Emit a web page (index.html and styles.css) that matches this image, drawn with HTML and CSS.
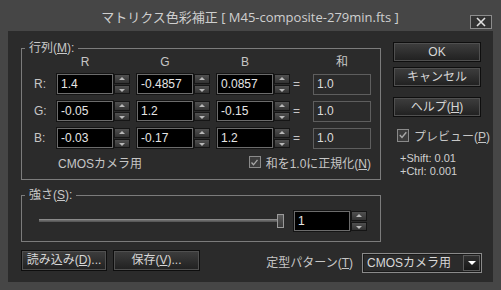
FILE: index.html
```html
<!DOCTYPE html>
<html lang="ja">
<head>
<meta charset="utf-8">
<link rel="stylesheet" href="styles.css">
</head>
<body>
<div class="window">
  <div class="titlebar">
    <div class="title">マトリクス色彩補正 [ M45-composite-279min.fts ]</div>
    <div class="close"><svg width="12" height="10" viewBox="0 0 12 10"><path d="M2 1 L10 9 M10 1 L2 9" stroke="#e0e0e0" stroke-width="1.6" fill="none"/></svg></div>
  </div>
  <div class="client">
    <div class="top">
      <div class="leftcol">
        <fieldset class="group matrix">
          <legend>行列(<u>M</u>):</legend>
          <div class="mhead">
            <span class="hlabel"></span>
            <span class="hcell">R</span>
            <span class="hcell">G</span>
            <span class="hcell last">B</span>
            <span class="heq"></span>
            <span class="hsum">和</span>
          </div>
          <div class="mrow">
            <span class="rlabel">R:</span>
            <span class="cell"><span class="field">1.4</span><span class="spin"><span class="sbtn up"></span><span class="sbtn down"></span></span></span>
            <span class="cell"><span class="field">-0.4857</span><span class="spin"><span class="sbtn up"></span><span class="sbtn down"></span></span></span>
            <span class="cell last"><span class="field">0.0857</span><span class="spin"><span class="sbtn up"></span><span class="sbtn down"></span></span></span>
            <span class="eq">=</span>
            <span class="sum">1.0</span>
          </div>
          <div class="mrow">
            <span class="rlabel">G:</span>
            <span class="cell"><span class="field">-0.05</span><span class="spin"><span class="sbtn up"></span><span class="sbtn down"></span></span></span>
            <span class="cell"><span class="field">1.2</span><span class="spin"><span class="sbtn up"></span><span class="sbtn down"></span></span></span>
            <span class="cell last"><span class="field">-0.15</span><span class="spin"><span class="sbtn up"></span><span class="sbtn down"></span></span></span>
            <span class="eq">=</span>
            <span class="sum">1.0</span>
          </div>
          <div class="mrow">
            <span class="rlabel">B:</span>
            <span class="cell"><span class="field">-0.03</span><span class="spin"><span class="sbtn up"></span><span class="sbtn down"></span></span></span>
            <span class="cell"><span class="field">-0.17</span><span class="spin"><span class="sbtn up"></span><span class="sbtn down"></span></span></span>
            <span class="cell last"><span class="field">1.2</span><span class="spin"><span class="sbtn up"></span><span class="sbtn down"></span></span></span>
            <span class="eq">=</span>
            <span class="sum">1.0</span>
          </div>
          <div class="noterow">
            <span class="note">CMOSカメラ用</span>
            <span class="check small"><svg width="9" height="9" viewBox="0 0 9 9"><path d="M1.5 4.5 L3.5 6.8 L7.5 1.8" stroke="#a8a8a8" stroke-width="1.3" fill="none"/></svg></span>
            <span class="checklabel">和を1.0に正規化(<u>N</u>)</span>
          </div>
        </fieldset>
        <fieldset class="group strength">
          <legend>強さ(<u>S</u>):</legend>
          <div class="srow">
            <div class="slider"><div class="track"></div><div class="thumb"></div></div>
            <span class="cell"><span class="field">1</span><span class="spin"><span class="sbtn up"></span><span class="sbtn down"></span></span></span>
          </div>
        </fieldset>
      </div>
      <div class="rightcol">
        <div class="btn">OK</div>
        <div class="btn">キャンセル</div>
        <div class="btn help">ヘルプ(<u>H</u>)</div>
        <div class="previewrow">
          <span class="check"><svg width="10" height="10" viewBox="0 0 10 10"><path d="M1.8 5 L4 7.5 L8.3 2.2" stroke="#a8a8a8" stroke-width="1.4" fill="none"/></svg></span>
          <span class="checklabel">プレビュー(<u>P</u>)</span>
        </div>
        <div class="hint"><div>+Shift: 0.01</div><div>+Ctrl: 0.001</div></div>
      </div>
    </div>
    <div class="bottom">
      <div class="btn wide">読み込み(<u>D</u>)...</div>
      <div class="btn wide">保存(<u>V</u>)...</div>
      <span class="patlabel">定型パターン(<u>T</u>)</span>
      <div class="combo"><span class="combotext">CMOSカメラ用</span><span class="dropbtn"></span></div>
    </div>
  </div>
</div>
</body>
</html>
```

FILE: styles.css
```css
* { box-sizing: border-box; }
html, body { margin: 0; padding: 0; }
body {
  width: 501px;
  height: 290px;
  overflow: hidden;
  background: #464646;
  font-family: "Liberation Sans", "Noto Sans CJK JP", sans-serif;
  font-size: 12px;
  color: #c6c6c6;
}
u { text-decoration: underline; text-underline-offset: 1px; }

.window { width: 501px; height: 290px; background: #464646; }

.titlebar {
  height: 31px;
  display: grid;
  grid-template-columns: 1fr auto 1fr;
  padding: 0 9px 0 8px;
}
.title {
  grid-column: 2;
  align-self: start;
  margin-top: 9px;
  font-family: "Open Sans", "Noto Sans CJK JP", sans-serif;
  font-size: 13px;
  line-height: 16px;
  color: #cfcfcf;
  white-space: nowrap;
}
.close {
  grid-column: 3;
  justify-self: end;
  align-self: start;
  margin-top: 15px;
  width: 22px;
  height: 14px;
  border: 1px solid #8c8c8c;
  background: #333;
  display: flex;
  align-items: center;
  justify-content: center;
}

.client {
  margin: 0 8px;
  height: 251px;
  background: #2b2b2b;
  padding: 10px 11px 0 13px;
}
.top { display: flex; gap: 12px; }
.leftcol { width: 360px; display: flex; flex-direction: column; }

.group {
  margin: 0;
  padding: 0 9px 10px 0;
  border: 1px solid #7c7c7c;
  width: 360px;
  min-width: 0;
}
.group legend {
  margin-left: 3px;
  padding: 0 4px;
  height: 14px;
  line-height: 14px;
  font-size: 12px;
  color: #c8c8c8;
}
.strength { margin-top: 8px; }

.mhead {
  display: flex;
  height: 14px;
  line-height: 14px;
  margin-bottom: 5px;
}
.hlabel { width: 35px; }
.hcell { width: 80px; padding-right: 24px; text-align: center; }
.hcell.last { width: 73px; padding-right: 17px; }
.heq { width: 23px; }
.hsum { width: 58px; text-align: center; }

.mrow {
  display: flex;
  height: 20px;
  align-items: center;
  margin-bottom: 7px;
}
.rlabel { width: 35px; padding-left: 12px; line-height: 20px; }
.cell { width: 80px; display: flex; height: 20px; }
.cell.last { width: 73px; }
.field {
  width: 56px;
  height: 20px;
  background: #000;
  border: 1px solid #6c6c6c;
  box-shadow: 0 0 0 1px #141414;
  color: #e6e6e6;
  padding-left: 3px;
  line-height: 18px;
  font-size: 12px;
}
.spin {
  width: 16px;
  height: 20px;
  margin-left: 1px;
  display: flex;
  flex-direction: column;
  gap: 1px;
}
.sbtn {
  flex: 1;
  background: linear-gradient(#505050, #323232);
  border: 1px solid #151515;
  position: relative;
}
.sbtn::after {
  content: "";
  position: absolute;
  left: 4px;
  top: 2px;
  border-left: 3px solid transparent;
  border-right: 3px solid transparent;
}
.sbtn.up::after { border-bottom: 3px solid #b8b8b8; }
.sbtn.down::after { border-top: 3px solid #b8b8b8; top: 3px; }
.eq { width: 23px; padding-left: 3px; line-height: 20px; }
.sum {
  width: 58px;
  height: 21px;
  border: 1px solid #5e5e5e;
  background: #2b2b2b;
  padding-left: 3px;
  line-height: 19px;
  color: #dcdcdc;
}

.noterow {
  display: flex;
  align-items: center;
  height: 14px;
}
.note { margin-left: 36px; width: 195px; }
.check {
  width: 13px;
  height: 13px;
  border: 1px solid #8a8a8a;
  background: #3c3c3c;
  display: inline-flex;
  align-items: center;
  justify-content: center;
}
.check.small { width: 12px; height: 12px; }
.checklabel { margin-left: 5px; white-space: nowrap; }

.srow {
  display: flex;
  align-items: center;
  height: 20px;
  margin-top: 9px;
}
.slider {
  position: relative;
  margin-left: 17px;
  width: 245px;
  height: 14px;
}
.track {
  margin-top: 5px;
  width: 241px;
  height: 3px;
  border-top: 1px solid #8a8a8a;
  border-bottom: 1px solid #5a5a5a;
  background: #6a6a6a;
}
.thumb {
  position: absolute;
  left: 238px;
  top: 0;
  width: 7px;
  height: 14px;
  border: 1px solid #9a9a9a;
  background: linear-gradient(#5a5a5a, #3a3a3a);
}
.srow .cell { margin-left: 14px; }

.rightcol {
  width: 88px;
  margin-top: 1px;
  display: flex;
  flex-direction: column;
}
.btn {
  height: 20px;
  border: 1px solid #0e0e0e;
  box-shadow: inset 0 0 0 1px #505050;
  background: linear-gradient(#3e3e3e, #202020);
  color: #d6d6d6;
  text-align: center;
  line-height: 18px;
  font-size: 12px;
  margin-bottom: 5px;
  white-space: nowrap;
}
.btn.help { margin-top: 5px; }
.previewrow {
  display: flex;
  align-items: center;
  height: 14px;
  margin-top: 6px;
  padding-left: 4px;
}
.hint {
  margin-top: 10px;
  padding-left: 7px;
  font-size: 11px;
  line-height: 13px;
  color: #cfcfcf;
}
.hint div { height: 13px; }

.bottom {
  display: flex;
  align-items: flex-start;
  margin-top: 8px;
}
.btn.wide { width: 86px; height: 21px; line-height: 19px; margin-right: 6px; margin-bottom: 0; }
.btn.wide + .btn.wide { width: 87px; }
.patlabel {
  margin-left: auto;
  margin-right: 9px;
  margin-top: 4px;
  line-height: 18px;
}
.combo {
  margin-top: 3px;
  width: 120px;
  height: 20px;
  border: 1px solid #8a8a8a;
  box-shadow: inset 0 0 0 1px #1a1a1a;
  background: #2b2b2b;
  display: flex;
  align-items: center;
  padding: 0 1px 0 4px;
}
.combotext { flex: 1; color: #d8d8d8; line-height: 18px; }
.dropbtn {
  width: 17px;
  height: 16px;
  border: 1px solid #5a5a5a;
  background: linear-gradient(#303030, #181818);
  position: relative;
}
.dropbtn::after {
  content: "";
  position: absolute;
  left: 4px;
  top: 5px;
  border-left: 4px solid transparent;
  border-right: 4px solid transparent;
  border-top: 4px solid #ffffff;
}
```
